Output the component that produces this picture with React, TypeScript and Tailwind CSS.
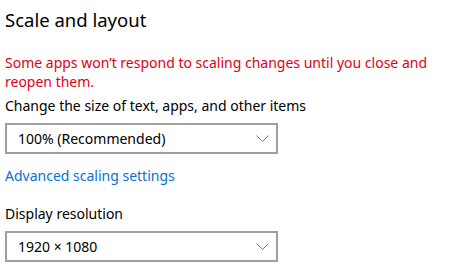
function Select({ value }: { value: string }) {
    return (
        <div className="mt-[7px] flex h-[31px] w-[273px] items-center justify-between border-2 border-[#a0a0a0] bg-white pl-[11px] pr-[7px]">
            <span className="text-[14px] text-black">{value}</span>
            <svg width="13" height="8" viewBox="0 0 13 8" fill="none" className="mt-[1px]">
                <polyline points="0.5,0.5 6.5,6.5 12.5,0.5" stroke="#7a7a7a" strokeWidth="1" />
            </svg>
        </div>
    );
}

export default function App() {
    return (
        <div className="min-h-[273px] w-[474px] bg-white px-[5px] pt-[7px] font-['Noto_Sans',sans-serif] text-black">
            <h1 className="text-[18.5px] leading-[26px]">Scale and layout</h1>
            <p className="mt-[20px] text-[14px] leading-[19px] text-[#e00018]">
                Some apps won’t respond to scaling changes until you close and reopen them.
            </p>
            <p className="mt-[5px] text-[14px] leading-[20px]">Change the size of text, apps, and other items</p>
            <Select value="100% (Recommended)" />
            <p className="mt-[12px] text-[14px] leading-[20px] text-[#0a70d0]">Advanced scaling settings</p>
            <p className="mt-[18px] text-[14px] leading-[20px]">Display resolution</p>
            <Select value="1920 × 1080" />
        </div>
    );
}
